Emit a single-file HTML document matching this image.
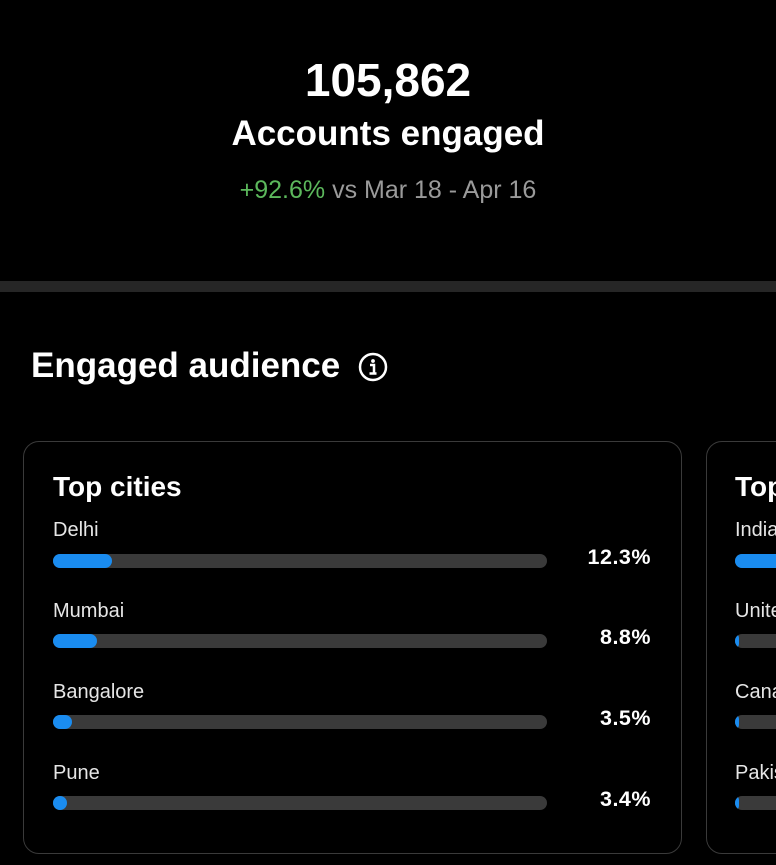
<!DOCTYPE html>
<html><head><style>
body{margin:0;width:776px;height:865px;background:#000;overflow:hidden;font-family:"Liberation Sans",sans-serif;color:#fff;position:relative}
.a{position:absolute;white-space:nowrap}
.card{position:absolute;top:441px;height:413px;border:1.5px solid #3a3a3a;border-radius:16px;box-sizing:border-box}
.bar{position:absolute;height:14px;background:#3a3a3a;border-radius:7px;overflow:hidden}
.bar i{position:absolute;left:0;top:0;bottom:0;background:#1a8cf0;border-radius:0 7px 7px 0}
.lbl{font-size:20px;color:#e6e6e6}
.pct{font-size:21.5px;font-weight:bold;right:125px;text-align:right;letter-spacing:.5px}
</style></head><body>
<div class="a" style="left:0;width:776px;text-align:center;top:53px;font-size:46px;font-weight:bold">105,862</div>
<div class="a" style="left:0;width:776px;text-align:center;top:114px;font-size:35px;font-weight:bold">Accounts engaged</div>
<div class="a" style="left:0;width:776px;text-align:center;top:176px;font-size:25px;color:#9a9a9a"><span style="color:#5cb85c">+92.6%</span> vs Mar 18 - Apr 16</div>
<div class="a" style="left:0;top:281px;width:776px;height:11px;background:#262626"></div>
<div class="a" style="left:31px;top:346px;font-size:35px;font-weight:bold">Engaged audience</div>
<svg class="a" style="left:358px;top:352px" width="30" height="30" viewBox="0 0 30 30"><circle cx="15" cy="15" r="13" fill="none" stroke="#fff" stroke-width="2.5"/><circle cx="15" cy="9" r="1.9" fill="#fff"/><path d="M12 13h4v8M11.5 21.5h7" stroke="#fff" stroke-width="2.5" fill="none"/></svg>
<div class="card" style="left:23px;width:659px"></div>
<div class="card" style="left:706px;width:200px"></div>
<div class="a" style="left:53px;top:471px;font-size:28px;font-weight:bold">Top cities</div>
<div class="a" style="left:735px;top:471px;font-size:28px;font-weight:bold">Top</div>

<div class="a lbl" style="left:53px;top:519px">Delhi</div>
<div class="bar" style="left:53px;width:494px;top:554px"><i style="width:59px"></i></div>
<div class="a pct" style="top:545px">12.3%</div>
<div class="a lbl" style="left:53px;top:600px">Mumbai</div>
<div class="bar" style="left:53px;width:494px;top:634px"><i style="width:44px"></i></div>
<div class="a pct" style="top:625px">8.8%</div>
<div class="a lbl" style="left:53px;top:681px">Bangalore</div>
<div class="bar" style="left:53px;width:494px;top:715px"><i style="width:19px"></i></div>
<div class="a pct" style="top:706px">3.5%</div>
<div class="a lbl" style="left:53px;top:762px">Pune</div>
<div class="bar" style="left:53px;width:494px;top:796px"><i style="width:14px"></i></div>
<div class="a pct" style="top:787px">3.4%</div>

<div class="a lbl" style="left:735px;top:519px">India</div>
<div class="bar" style="left:735px;width:100px;top:554px;border-radius:7px 0 0 7px"><i style="width:100px"></i></div>
<div class="a lbl" style="left:735px;top:600px">United</div>
<div class="bar" style="left:735px;width:100px;top:634px;border-radius:7px 0 0 7px"><i style="width:4px"></i></div>
<div class="a lbl" style="left:735px;top:681px">Canada</div>
<div class="bar" style="left:735px;width:100px;top:715px;border-radius:7px 0 0 7px"><i style="width:4px"></i></div>
<div class="a lbl" style="left:735px;top:762px">Pakistan</div>
<div class="bar" style="left:735px;width:100px;top:796px;border-radius:7px 0 0 7px"><i style="width:4px"></i></div>
</body></html>
